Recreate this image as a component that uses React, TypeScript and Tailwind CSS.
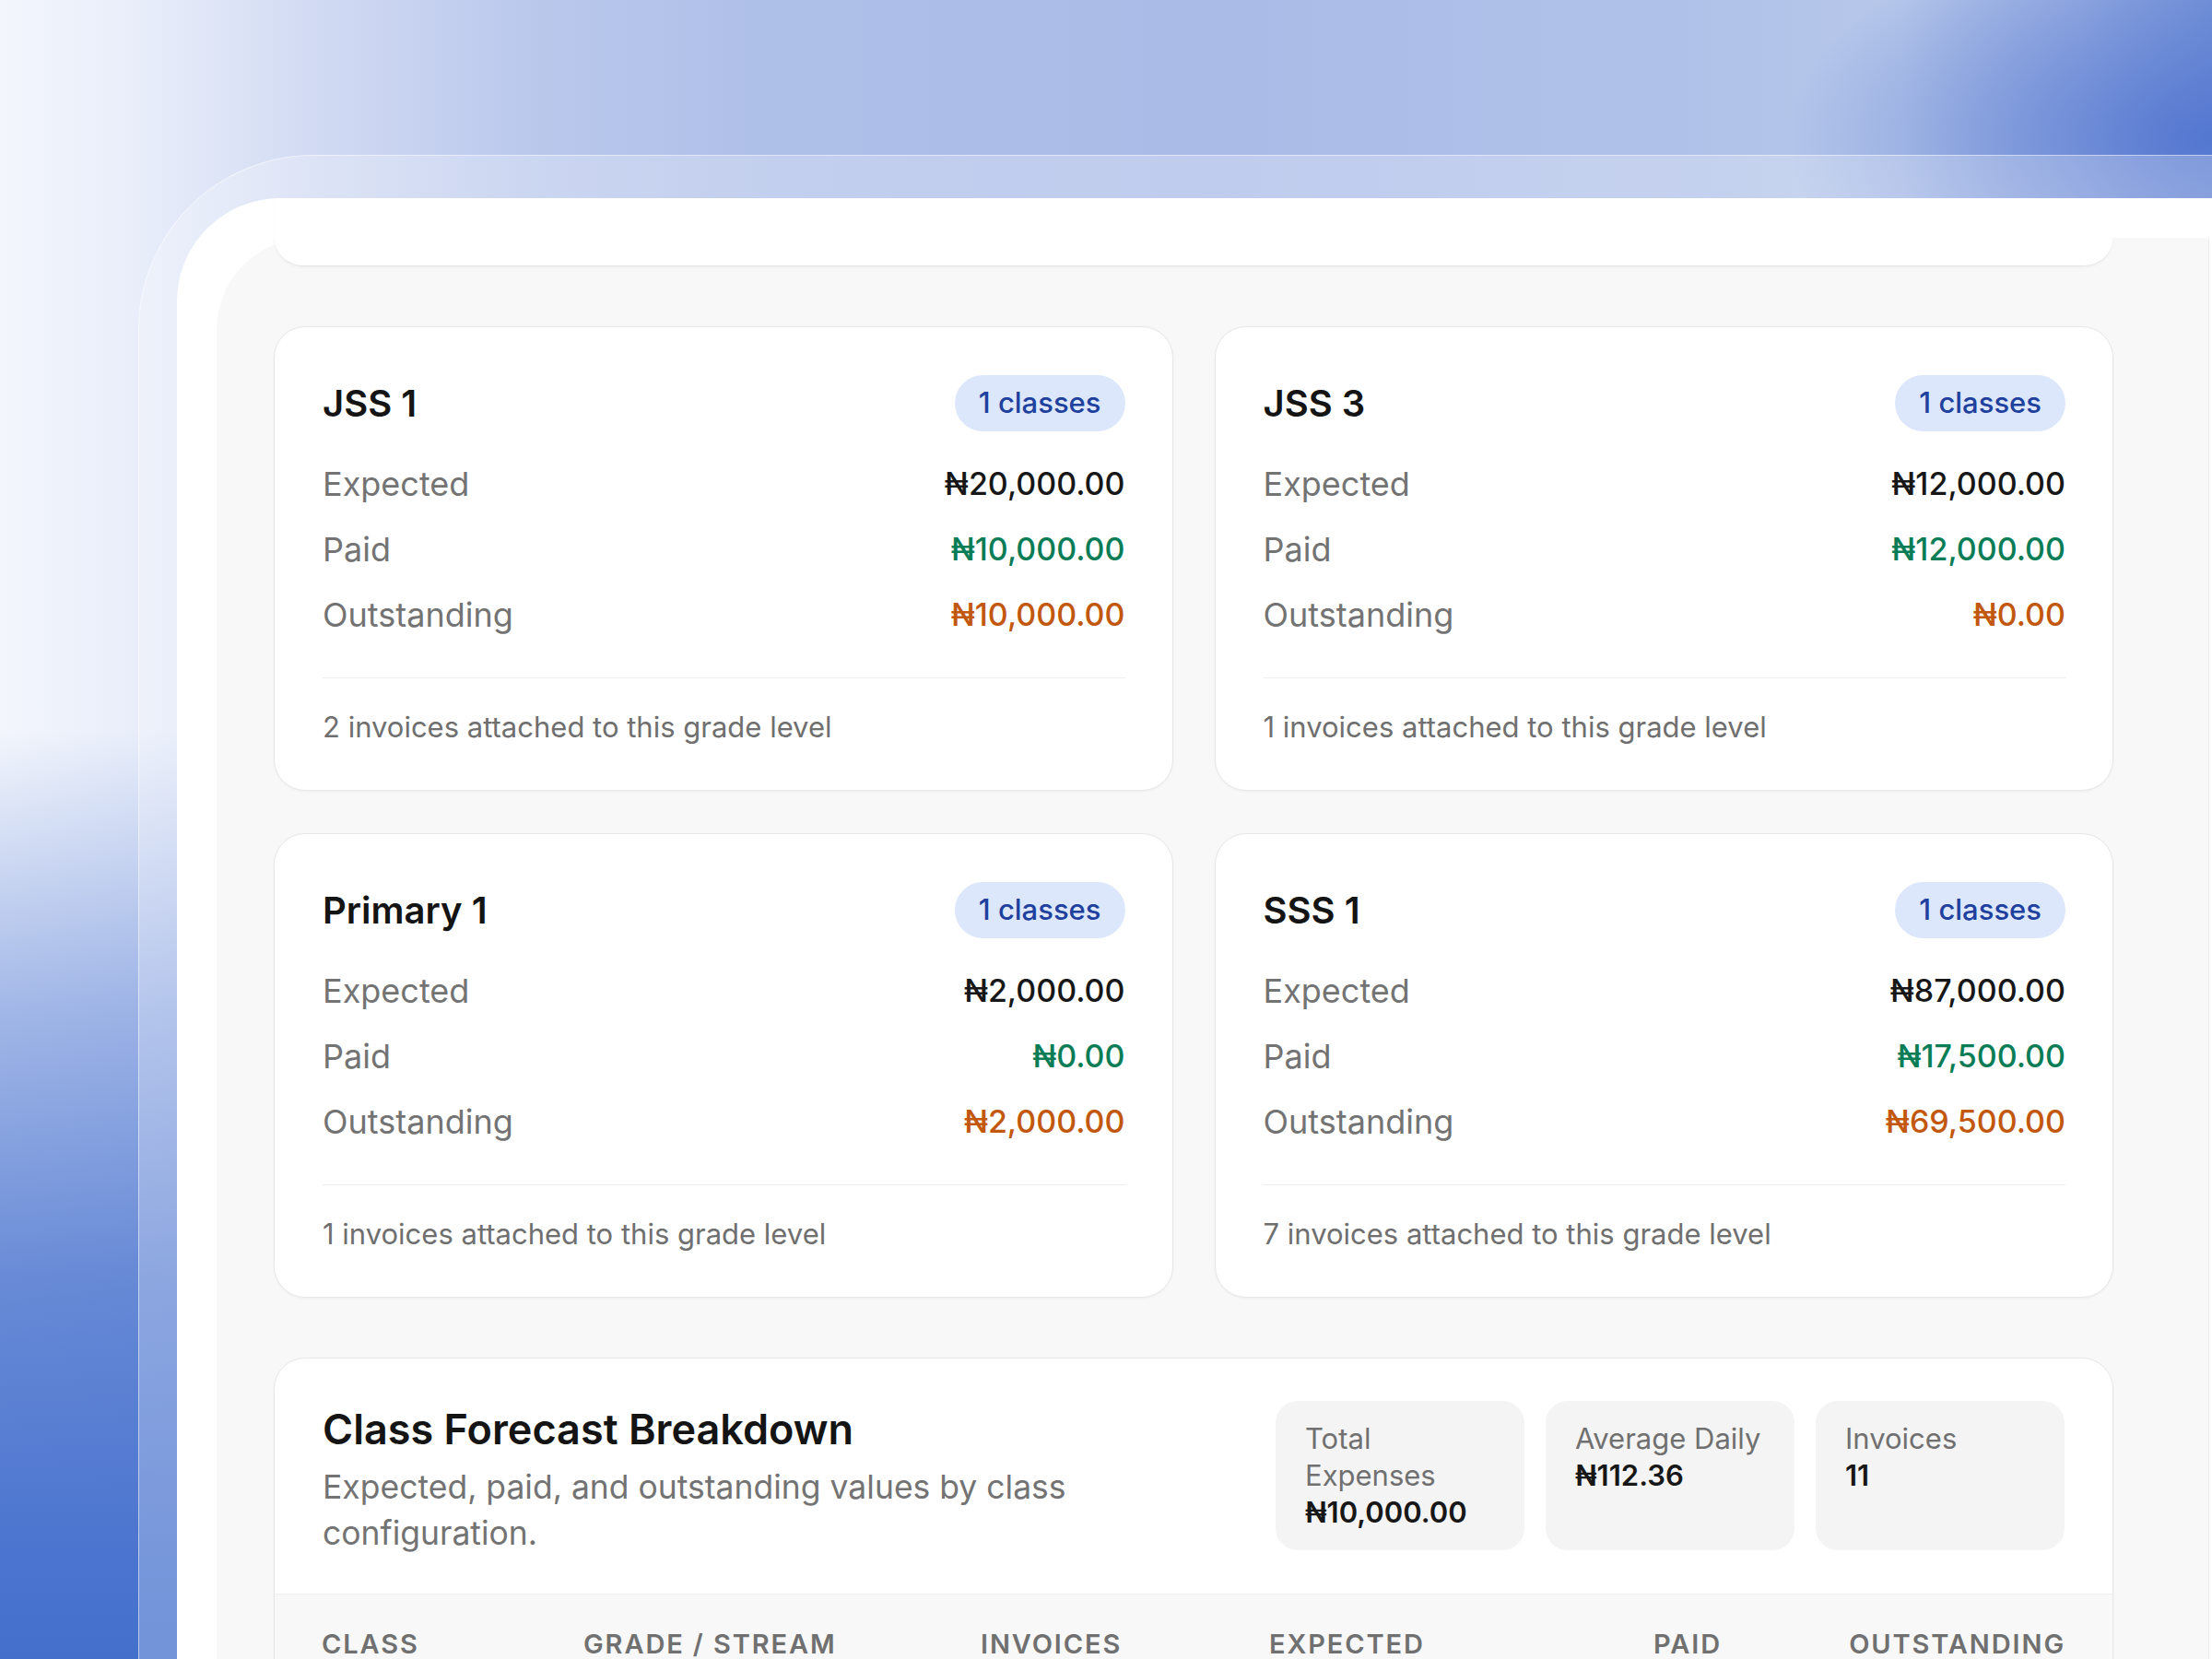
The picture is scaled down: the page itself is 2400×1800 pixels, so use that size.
import React from "react";

type Grade = {
  name: string;
  expected: string;
  paid: string;
  outstanding: string;
  invoices: number;
};

const grades: Grade[] = [
  { name: "JSS 1", expected: "₦20,000.00", paid: "₦10,000.00", outstanding: "₦10,000.00", invoices: 2 },
  { name: "JSS 3", expected: "₦12,000.00", paid: "₦12,000.00", outstanding: "₦0.00", invoices: 1 },
  { name: "Primary 1", expected: "₦2,000.00", paid: "₦0.00", outstanding: "₦2,000.00", invoices: 1 },
  { name: "SSS 1", expected: "₦87,000.00", paid: "₦17,500.00", outstanding: "₦69,500.00", invoices: 7 },
];

function GradeCard({ g }: { g: Grade }) {
  return (
    <div className="rounded-[34px] border border-[#e7e7e7] bg-white pl-[52px] pr-[51px] pt-[52px] pb-[48px] shadow-[0_1px_3px_rgba(0,0,0,0.04)]">
      <div className="flex h-[61px] items-center justify-between">
        <h3 className="text-[40px] font-semibold leading-[61px] text-[#141414]">{g.name}</h3>
        <span className="flex h-[61px] items-center rounded-full bg-[#dce7fb] px-[26px] text-[31px] font-medium text-[#20409e]">
          1 classes
        </span>
      </div>
      <div className="mt-[33px] flex flex-col gap-[23px] leading-[48px]">
        <div className="flex items-center justify-between">
          <span className="text-[36px] text-[#737373]">Expected</span>
          <span className="text-[34px] font-medium text-[#171717]">{g.expected}</span>
        </div>
        <div className="flex items-center justify-between">
          <span className="text-[36px] text-[#737373]">Paid</span>
          <span className="text-[34px] font-medium text-[#0a7d57]">{g.paid}</span>
        </div>
        <div className="flex items-center justify-between">
          <span className="text-[36px] text-[#737373]">Outstanding</span>
          <span className="text-[34px] font-medium text-[#c2570e]">{g.outstanding}</span>
        </div>
      </div>
      <div className="mt-[44px] h-px bg-[#eeeeee]" />
      <p className="mt-[33px] text-[31px] leading-[40px] text-[#6f6f6f]">
        {g.invoices} invoices attached to this grade level
      </p>
    </div>
  );
}

function Stat({ label, value }: { label: string; value: string }) {
  return (
    <div className="w-[270px] rounded-[24px] bg-[#f4f4f4] px-[32px] pt-[21px] pb-[21px] text-[31px] leading-[40px]">
      <div className="text-[#707070]">{label}</div>
      <div className="font-semibold text-[#171717]">{value}</div>
    </div>
  );
}

export default function App() {
  return (
    <div className="flex h-[1800px] w-[2400px] overflow-hidden bg-[image:radial-gradient(ellipse_460px_240px_at_100%_150px,rgba(76,112,206,0.85),rgba(76,112,206,0)),linear-gradient(to_bottom,rgba(68,112,204,0)_0%,rgba(68,112,204,0)_44%,rgba(80,120,210,0.5)_61%,rgba(70,112,205,0.8)_77%,#4a74cf_94%,#4470cc_100%),linear-gradient(to_right,#f3f6fc_0%,#e9eefa_6%,#d2dbf3_14%,#bac8ec_24%,#aebfe8_35%,#aabbe7_55%,#b0c1e9_75%,#b6c7ea_86%,#a1b5e4_94%,#7f9bda_100%)] pl-[150px] pt-[168px] font-['Inter',sans-serif]">
      <div className="flex flex-1 flex-col rounded-tl-[190px] border-l border-t border-white/50 bg-white/25 pl-[41px] pt-[46px]">
        <div className="flex flex-1 flex-col overflow-hidden rounded-tl-[112px] bg-white pl-[43px] pt-[43px]">
          <div className="w-[2162px] flex-1 rounded-tl-[100px] border-r border-[#ececec] bg-[#f8f8f8] pl-[62px]">
            <div className="w-[1996px]">
              <div className="-mt-[170px] h-[201px] rounded-b-[32px] border-b border-[#e4e4e4] bg-white shadow-[0_2px_3px_rgba(0,0,0,0.03)]" />

              <div className="mt-[65px] grid grid-cols-2 gap-x-[45px] gap-y-[46px]">
                {grades.map((g) => (
                  <GradeCard key={g.name} g={g} />
                ))}
              </div>

              <div className="mt-[65px] overflow-hidden rounded-t-[34px] border border-[#e7e7e7] bg-white shadow-[0_1px_3px_rgba(0,0,0,0.04)]">
                <div className="flex items-start justify-between px-[52px] pb-[40px] pt-[46px]">
                  <div className="mt-[6px]">
                    <h2 className="text-[45px] font-semibold leading-[50px] text-[#141414]">
                      Class Forecast Breakdown
                    </h2>
                    <p className="mt-[13px] max-w-[940px] text-[35.5px] leading-[50px] text-[#737373]">
                      Expected, paid, and outstanding values by class configuration.
                    </p>
                  </div>
                  <div className="flex gap-[23px]">
                    <Stat label="Total Expenses" value="₦10,000.00" />
                    <Stat label="Average Daily" value="₦112.36" />
                    <Stat label="Invoices" value="11" />
                  </div>
                </div>
                <div className="border-t border-[#efefef] bg-[#f8f8f8] px-[51px] pb-[40px] pt-[34px]">
                  <div className="grid grid-cols-[284px_431px_313px_242px_249px_1fr] text-[29px] font-semibold uppercase leading-[40px] tracking-[0.065em] text-[#707070]">
                    <div>Class</div>
                    <div>Grade / Stream</div>
                    <div>Invoices</div>
                    <div>Expected</div>
                    <div className="text-right">Paid</div>
                    <div className="text-right">Outstanding</div>
                  </div>
                </div>
              </div>
            </div>
          </div>
        </div>
      </div>
    </div>
  );
}
